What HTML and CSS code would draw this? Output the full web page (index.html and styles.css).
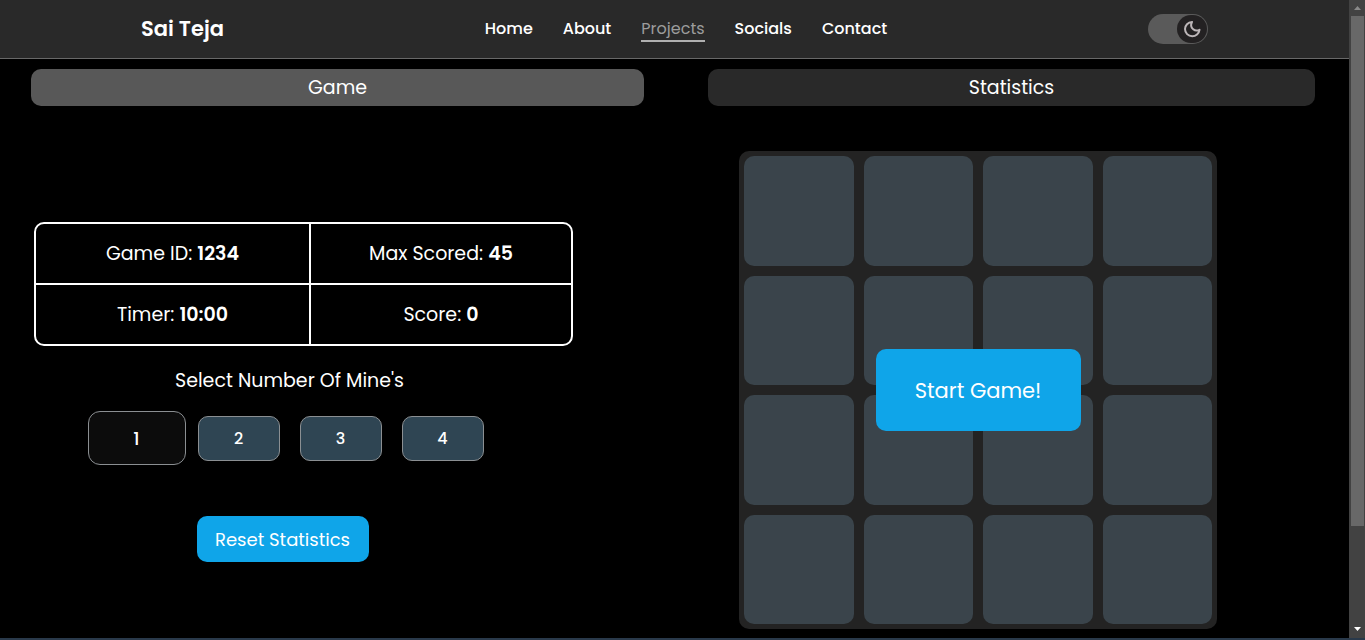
FILE: index.html
```html
<!DOCTYPE html>
<html lang="en">
<head>
<meta charset="utf-8">
<meta name="viewport" content="width=device-width, initial-scale=1">
<title>Mines | Sai Teja</title>
<link rel="stylesheet" href="styles.css">
</head>
<body>
<div class="window">
  <div class="page">
    <header class="header">
      <a class="logo" href="#">Sai Teja</a>
      <nav class="nav">
        <a href="#">Home</a>
        <a href="#">About</a>
        <a class="active" href="#" aria-current="page">Projects</a>
        <a href="#">Socials</a>
        <a href="#">Contact</a>
      </nav>
      <button class="theme-toggle" type="button" aria-label="Dark theme">
        <span class="knob">
          <svg viewBox="0 0 18 18" width="18" height="18" aria-hidden="true"><path d="M9 2C5 2.200 2 5.300 2 9C2 13 5.200 16.200 9.200 16.200C12.800 16.200 16 13.600 16.500 9.800C14.600 10.800 12 10.700 10.200 9.200C8 7.500 7.700 4.500 9 2Z" fill="none" stroke="currentColor" stroke-width="2" stroke-linejoin="round"/></svg>
        </span>
      </button>
    </header>
    <main class="main">
      <div class="tabs">
        <button class="tab selected" type="button">Game</button>
        <button class="tab" type="button">Statistics</button>
      </div>
      <div class="content">
        <section class="info">
          <table class="stats">
            <tbody>
              <tr><td>Game ID: <b>1234</b></td><td>Max Scored: <b>45</b></td></tr>
              <tr><td>Timer: <b>10:00</b></td><td>Score: <b>0</b></td></tr>
            </tbody>
          </table>
          <div class="picker">
            <h2 class="picker-title">Select Number Of Mine's</h2>
            <div class="mines">
              <button class="mine chosen" type="button">1</button>
              <button class="mine" type="button">2</button>
              <button class="mine" type="button">3</button>
              <button class="mine" type="button">4</button>
            </div>
          </div>
          <div class="reset-row"><button class="reset" type="button">Reset Statistics</button></div>
        </section>
        <section class="board">
          <div class="tile"></div><div class="tile"></div><div class="tile"></div><div class="tile"></div>
          <div class="tile"></div><div class="tile"></div><div class="tile"></div><div class="tile"></div>
          <div class="tile"></div><div class="tile"></div><div class="tile"></div><div class="tile"></div>
          <div class="tile"></div><div class="tile"></div><div class="tile"></div><div class="tile"></div>
          <button class="start" type="button">Start Game!</button>
        </section>
      </div>
    </main>
  </div>
  <div class="scrollbar" aria-hidden="true">
    <svg class="arrow dim" viewBox="0 0 13 16"><path d="M3 10L6.500 6L10 10Z" fill="currentColor"/></svg>
    <div class="thumb"></div>
    <svg class="arrow down" viewBox="0 0 13 16"><path d="M3 5H10L6.500 9Z" fill="currentColor"/></svg>
  </div>
</div>
<div class="edge"></div>
</body>
</html>
```
FILE: styles.css
```css
* { box-sizing: border-box; }

body {
  margin: 0;
  min-height: 100vh;
  display: flex;
  flex-direction: column;
  background: #000;
  color: #fff;
  font-family: Poppins, Inter, sans-serif;
  font-size: 16px;
}

button { font: inherit; color: inherit; border: 0; padding: 0; cursor: pointer; }
a { color: inherit; text-decoration: none; }

.window { flex: 1; display: flex; }
.page { flex: 1; display: flex; flex-direction: column; }

.header {
  display: flex;
  align-items: center;
  justify-content: space-between;
  padding: 14px 141px;
  background: #292929;
  border-bottom: 1px solid #686868;
}
.logo { font-size: 21px; line-height: 30px; font-weight: 600; }
.nav { display: flex; gap: 30px; font-weight: 500; line-height: 22px; }
.nav a { padding-top: 2px; border-bottom: 2px solid transparent; }
.nav .active { color: #9c9c9c; border-color: #b0b0b0; font-weight: 400; }

.theme-toggle {
  display: flex;
  justify-content: flex-end;
  width: 60px;
  height: 30px;
  padding: 1px;
  border-radius: 15px;
  background: #5a5a5a;
}
.knob {
  display: grid;
  place-items: center;
  width: 30px;
  height: 28px;
  border-radius: 14px;
  background: #232122;
  color: #bcb6b8;
}

.main { flex: 1; display: flex; flex-direction: column; padding-top: 10px; }
.tabs { display: grid; grid-template-columns: 613fr 607fr; gap: 64px; padding: 0 34px 0 31px; }
.tab { height: 37px; border-radius: 10px; background: #292929; font-size: 19px; }
.tab.selected { background: #585858; }

.content {
  flex: 1;
  display: grid;
  grid-template-columns: 539fr 478fr;
  gap: 166px;
  align-items: center;
  padding: 45px 132px 9px 34px;
}

.info { padding-top: 4px; }
.stats {
  width: 100%;
  border: 2px solid #fff;
  border-radius: 10px;
  border-spacing: 0;
  font-size: 19px;
  line-height: 30px;
  text-align: center;
}
.stats b { font-weight: 600; }
.stats td { padding: 15px 0 14px; }
.stats td:first-child { width: 275px; border-right: 2px solid #fff; }
.stats tr:first-child td { border-bottom: 2px solid #fff; }

.picker { padding-right: 28px; margin-top: 20px; }
.picker-title { margin: 0 0 15px; font-size: 19px; line-height: 30px; font-weight: 400; text-align: center; }
.mines { display: flex; justify-content: center; align-items: center; gap: 20px; }
.mine {
  width: 82px;
  height: 45px;
  border: 1px solid #8b8f92;
  border-radius: 10px;
  background: #2f4553;
  font-weight: 500;
}
.mine.chosen {
  width: 98px;
  height: 54px;
  margin: 0 -8px;
  border-radius: 12px;
  background: #0c0c0c;
  font-size: 18px;
}
.reset-row { display: flex; justify-content: center; padding-right: 42px; margin-top: 51px; }
.reset { width: 172px; height: 46px; border-radius: 10px; background: #0fa5e9; font-size: 18px; }

.board {
  position: relative;
  display: grid;
  grid-template-columns: repeat(4, 1fr);
  gap: 10px;
  padding: 5px;
  border-radius: 10px;
  background: #232323;
}
.tile { aspect-ratio: 1; border-radius: 10px; background: #3a444b; }
.start {
  position: absolute;
  inset: 0;
  margin: auto;
  width: 205px;
  height: 82px;
  border-radius: 10px;
  background: #0fa5e9;
  font-size: 21px;
}

.scrollbar { display: flex; flex-direction: column; width: 16px; padding: 0 1px 0 2px; background: #424242; }
.arrow { width: 13px; height: 16px; color: #fff; }
.arrow.dim { color: #8a8a8a; }
.arrow.down { margin-top: auto; }
.thumb { height: 80%; background: #686868; }

.edge { height: 2px; background: #29394a; }
```
